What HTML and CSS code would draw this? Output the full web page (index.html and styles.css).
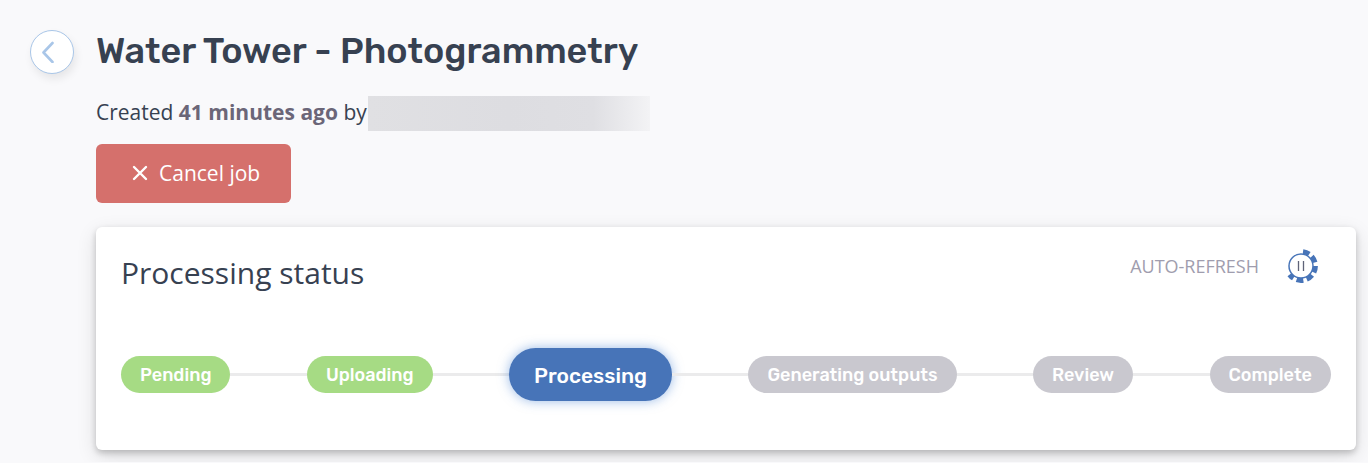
FILE: index.html
```html
<!DOCTYPE html>
<html lang="en">
<head>
    <meta charset="UTF-8">
    <meta name="viewport" content="width=device-width, initial-scale=1.0">
    <title>Water Tower - Photogrammetry</title>
    <link rel="stylesheet" href="styles.css">
</head>
<body>
    <div class="page">
        <button class="back" type="button" aria-label="Back">
            <svg width="14" height="22" viewBox="0 0 14 22">
                <path d="M11.5 2 L2.5 11.5 L11.5 21" fill="none" stroke="#a9c6e8" stroke-width="2.6" stroke-linecap="round" stroke-linejoin="round"/>
            </svg>
        </button>

        <main class="content">
            <h1 class="title">Water Tower - Photogrammetry</h1>
            <div class="created">
                <span>Created <strong>41 minutes ago</strong> by</span>
                <span class="redacted"></span>
            </div>
            <button class="cancel" type="button">
                <svg width="16" height="16" viewBox="0 0 16 16">
                    <path d="M2 2 L14 14 M14 2 L2 14" fill="none" stroke="#fff" stroke-width="2.4" stroke-linecap="round"/>
                </svg>
                Cancel job
            </button>

            <section class="card">
                <div class="card-header">
                    <h2 class="card-title">Processing status</h2>
                    <div class="refresh">
                        <span class="refresh-label" id="refresh-label">AUTO-REFRESH</span>
                        <button class="pause" type="button" aria-labelledby="refresh-label">
                            <svg width="36" height="36" viewBox="0 0 36 36">
                                <circle cx="18" cy="18" r="12" fill="none" stroke="#4774b8" stroke-width="1.5"/>
                                <!-- progress teeth -->
                                <path d="M20.02 3.64 A14.5 14.5 0 1 1 6.4 26.7" fill="none" stroke="#4774b8" stroke-width="4.8" stroke-dasharray="6.7 3.5"/>
                                <path d="M15.5 13 V23 M20.5 13 V23" fill="none" stroke="#5f6378" stroke-width="1.3"/>
                            </svg>
                        </button>
                    </div>
                </div>
                <div class="steps">
                    <span class="step done">Pending</span>
                    <span class="line"></span>
                    <span class="step done">Uploading</span>
                    <span class="line"></span>
                    <span class="step active">Processing</span>
                    <span class="line"></span>
                    <span class="step">Generating outputs</span>
                    <span class="line"></span>
                    <span class="step">Review</span>
                    <span class="line"></span>
                    <span class="step">Complete</span>
                </div>
            </section>
        </main>
    </div>
</body>
</html>
```
FILE: styles.css
```css
* {
    box-sizing: border-box;
}

body {
    margin: 0;
    background-color: #f9f9fb;
    color: #374151;
    font-family: "Open Sans", "Noto Sans", sans-serif;
}

button {
    border: none;
    padding: 0;
    font-family: inherit;
    cursor: pointer;
}

svg {
    display: block;
}

.page {
    display: flex;
    align-items: flex-start;
    gap: 22px;
    padding: 30px 12px 12px 30px;
}

.back {
    flex: none;
    display: flex;
    align-items: center;
    justify-content: center;
    width: 44px;
    height: 44px;
    padding-right: 8px;
    border: 1px solid #a9c6e8;
    border-radius: 50%;
    background-color: #fff;
    box-shadow: 2px 5px 8px rgba(0, 0, 0, 0.08);
}

.content {
    flex: 1;
    min-width: 0;
}

.title {
    margin: 0;
    font-family: Rubik, Roboto, sans-serif;
    font-size: 36px;
    font-weight: 500;
    line-height: 42px;
}

.created {
    display: flex;
    align-items: flex-start;
    margin-top: 24px;
    font-size: 21px;
    line-height: 33px;
}

.created strong {
    color: #6b6678;
}

.redacted {
    width: 282px;
    height: 35px;
    margin-left: 1px;
    background: linear-gradient(to right, #e0e0e3, #dddde1 50%, #dfdfe3 80%, #f3f3f5);
}

.cancel {
    display: flex;
    align-items: center;
    gap: 11px;
    height: 59px;
    margin-top: 13px;
    padding: 0 31px 1px 36px;
    border-radius: 6px;
    background-color: #d5706c;
    color: #fff;
    font-size: 21px;
}

.card {
    margin-top: 24px;
    padding: 24px 25px 49px;
    border-radius: 6px;
    background-color: #fff;
    box-shadow: 0 3px 6px rgba(0, 0, 0, 0.2), 0 6px 20px rgba(0, 0, 0, 0.12);
}

.card-header {
    display: flex;
    justify-content: space-between;
    align-items: flex-start;
}

.card-title {
    margin: 0;
    font-size: 30px;
    font-weight: 400;
    line-height: 44px;
}

.refresh {
    display: flex;
    align-items: center;
    gap: 24px;
    margin-top: -3px;
    padding-right: 12px;
}

.refresh-label {
    color: #9f9dae;
    font-size: 18px;
}

.pause {
    background: none;
}

.steps {
    display: flex;
    align-items: center;
    margin-top: 53px;
}

.step {
    padding: 2px 19px 0;
    border-radius: 27px;
    background-color: #c9c8cf;
    color: #fff;
    font-family: Rubik, Roboto, sans-serif;
    font-size: 18px;
    font-weight: 500;
    line-height: 35px;
    white-space: nowrap;
}

.step.done {
    background-color: #a6db84;
}

.step.active {
    padding: 2px 25px 0;
    background-color: #4774b8;
    box-shadow: 0 0 12px rgba(71, 130, 210, 0.55);
    font-size: 21px;
    line-height: 51px;
}

.line {
    flex: 1;
    height: 3px;
    background-color: #ebebec;
}
```
